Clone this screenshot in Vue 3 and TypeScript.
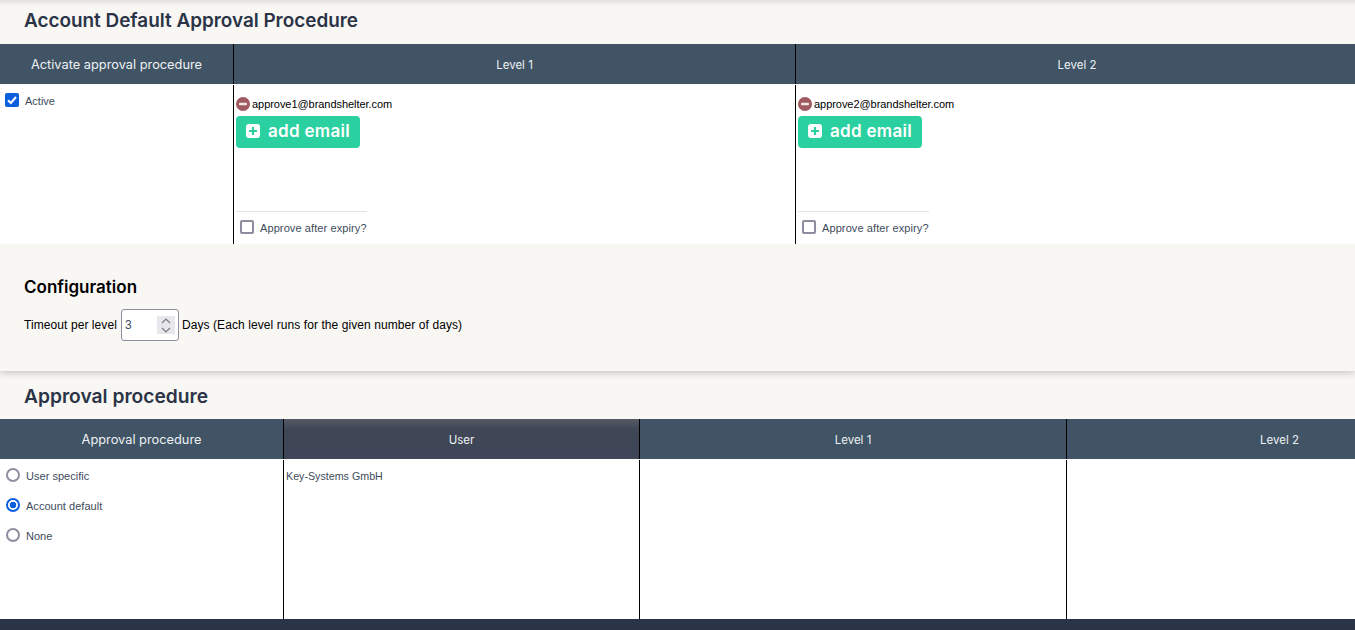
<script setup lang="ts">
const levels = [
  { name: 'Level 1', email: 'approve1@brandshelter.com' },
  { name: 'Level 2', email: 'approve2@brandshelter.com' },
]
const options = [
  { label: 'User specific', checked: false },
  { label: 'Account default', checked: true },
  { label: 'None', checked: false },
]
</script>

<template>
  <div class="page">
    <section class="top">
      <h2 class="title">Account Default Approval Procedure</h2>
      <div class="grid grid-a head">
        <div class="th">Activate approval procedure</div>
        <div v-for="l in levels" :key="l.name" class="th line lvl">{{ l.name }}</div>
      </div>
      <div class="grid grid-a body body-a">
        <div class="td active-cell">
          <svg class="check" width="14" height="14" viewBox="0 0 14 14">
            <rect width="14" height="14" rx="2" fill="#0b5fdd" />
            <path d="M3 7.2 5.8 10 11 4" fill="none" stroke="#fff" stroke-width="2" />
          </svg>
          <span class="small active-label">Active</span>
        </div>
        <div v-for="l in levels" :key="l.email" class="td line level">
          <div class="mail">
            <svg width="14" height="14" viewBox="0 0 14 14">
              <circle cx="7" cy="7" r="7" fill="#a05a60" />
              <rect x="3" y="5.8" width="8" height="2.4" rx="0.6" fill="#f3e6e6" />
            </svg>
            <span>{{ l.email }}</span>
          </div>
          <button class="add" type="button">
            <svg class="add-icon" width="14" height="14" viewBox="0 0 14 14">
              <rect width="14" height="14" rx="3" fill="#fff" />
              <path d="M7 3v8M3 7h8" stroke="#2ad0a0" stroke-width="2.2" />
            </svg>
            <span class="add-label">add email</span>
          </button>
          <div class="expiry">
            <span class="box"></span>
            <span class="small expiry-label">Approve after expiry?</span>
          </div>
        </div>
      </div>
      <div class="config">
        <h3 class="cfg-title">Configuration</h3>
        <div class="cfg-row">
          <span>Timeout per level</span>
          <div class="num">
            <span>3</span>
            <div class="spin">
              <svg width="10" height="6" viewBox="0 0 10 6"><path d="M1 5 5 1l4 4" fill="none" stroke="#7b7b86" stroke-width="1.2" /></svg>
              <svg width="10" height="6" viewBox="0 0 10 6"><path d="M1 1l4 4 4-4" fill="none" stroke="#7b7b86" stroke-width="1.2" /></svg>
            </div>
          </div>
          <span>Days (Each level runs for the given number of days)</span>
        </div>
      </div>
    </section>
    <section class="bottom">
      <h2 class="title second">Approval procedure</h2>
      <div class="grid grid-b head">
        <div class="th">Approval procedure</div>
        <div class="th line user lvl">User</div>
        <div class="th line lvl">Level 1</div>
        <div class="th line lvl">Level 2</div>
      </div>
      <div class="grid grid-b body body-b">
        <div class="td options">
          <div v-for="o in options" :key="o.label" class="opt">
            <span class="radio" :class="{ on: o.checked }"></span>
            <span class="small opt-label">{{ o.label }}</span>
          </div>
        </div>
        <div class="td line"><span class="small company">Key-Systems GmbH</span></div>
        <div class="td line"></div>
        <div class="td line"></div>
      </div>
    </section>
    <div class="foot"></div>
  </div>
</template>

<style>
html, body { margin: 0; background: #f9f7f4; overflow: hidden; }
</style>

<style scoped>
.page {
  width: 1355px;
  height: 630px;
  overflow: hidden;
  display: flex;
  flex-direction: column;
  font-family: "Liberation Sans", Arial, sans-serif;
  background: #f9f7f4;
  position: relative;
}
.page::before {
  content: "";
  position: absolute;
  left: 0;
  right: 0;
  top: 0;
  height: 6px;
  background: linear-gradient(rgba(0, 0, 0, 0.09), rgba(0, 0, 0, 0));
}
.top {
  height: 371px;
  flex: none;
  box-shadow: 0 1px 8px rgba(0, 0, 0, 0.25);
  position: relative;
}
.title {
  margin: 0;
  height: 44px;
  box-sizing: border-box;
  padding: 11px 0 0 24px;
  font: 600 18.9px/20px Inter, sans-serif;
  color: #2b3447;
}
.second { height: 48px; padding-top: 15px; font-size: 19.2px; }
.grid { display: grid; }
.grid-a { grid-template-columns: 233px 562px 563px; }
.grid-b { grid-template-columns: 283px 356px 427px 426px; width: 1492px; }
.head { height: 40px; background: #405465; }
.th {
  display: flex;
  align-items: center;
  justify-content: center;
  padding-top: 1px;
  color: #eef1f3;
  font: 400 12.8px/16px Inter, sans-serif;
}
.lvl { font-size: 11.5px; }
.line { border-left: 1px solid #000; }
.user { background: linear-gradient(#565b66, #3f4757 25%, #3e4657); }
.body { background: #fff; height: 160px; }
.td { margin-top: 1px; min-width: 0; }
.small { font-size: 11px; line-height: 12px; color: #3d4c5c; }
.active-cell { display: flex; align-items: flex-start; gap: 6px; padding: 8px 5px; }
.active-label { margin-top: 2px; }
.level { display: flex; flex-direction: column; align-items: flex-start; padding: 12px 2px 0; }
.mail { display: flex; align-items: center; gap: 2px; font-size: 11px; letter-spacing: -0.05px; line-height: 14px; color: #000; height: 14px; }
.add {
  margin-top: 5px;
  width: 124px;
  height: 32px;
  display: flex;
  align-items: center;
  gap: 8px;
  padding: 0 0 2px 10px;
  border: 0;
  border-radius: 4px;
  background: #2ad0a0;
  color: #fff;
  font: 600 17px/20px Inter, sans-serif;
  letter-spacing: 0.3px;
}
.expiry {
  margin-top: 63px;
  width: 131px;
  box-sizing: border-box;
  height: 32px;
  border-top: 1px solid #e3e3e6;
  padding: 8px 0 0 4px;
  display: flex;
  align-items: flex-start;
  gap: 6px;
}
.expiry-label { margin-top: 2px; letter-spacing: 0.1px; }
.box {
  width: 14px;
  height: 14px;
  box-sizing: border-box;
  border: 2px solid #8f8d9f;
  border-radius: 2px;
}
.config { height: 127px; padding: 33px 24px 0; box-sizing: border-box; }
.cfg-title { margin: 0; font: 600 17px/20px Inter, sans-serif; color: #000; }
.cfg-row { display: flex; align-items: center; gap: 3px; margin-top: 12px; font-size: 12px; letter-spacing: 0.08px; color: #000; }
.num {
  width: 58px;
  height: 32px;
  margin-left: 1px;
  box-sizing: border-box;
  border: 1px solid #8f8d9f;
  border-radius: 3px;
  background: #fff;
  display: flex;
  align-items: center;
  justify-content: space-between;
  padding: 0 3px;
  color: #3d4c5c;
}
.spin {
  width: 18px;
  height: 18px;
  background: #e8e8ec;
  display: flex;
  flex-direction: column;
  align-items: center;
  justify-content: center;
  gap: 3px;
}
.options { padding: 8px 6px; display: flex; flex-direction: column; gap: 16px; }
.opt { display: flex; align-items: center; gap: 6px; height: 14px; }
.opt-label { margin-top: 2px; letter-spacing: 0.03px; }
.radio {
  width: 14px;
  height: 14px;
  box-sizing: border-box;
  border: 2px solid #8f8d9f;
  border-radius: 50%;
}
.radio.on {
  border-color: #0b5fdd;
  background: radial-gradient(circle, #0b5fdd 0 3px, #fff 3.6px);
}
.company { display: block; padding: 10px 2px; font-size: 10.7px; }
.foot { height: 11px; flex: none; background: #2b3447; }
</style>
